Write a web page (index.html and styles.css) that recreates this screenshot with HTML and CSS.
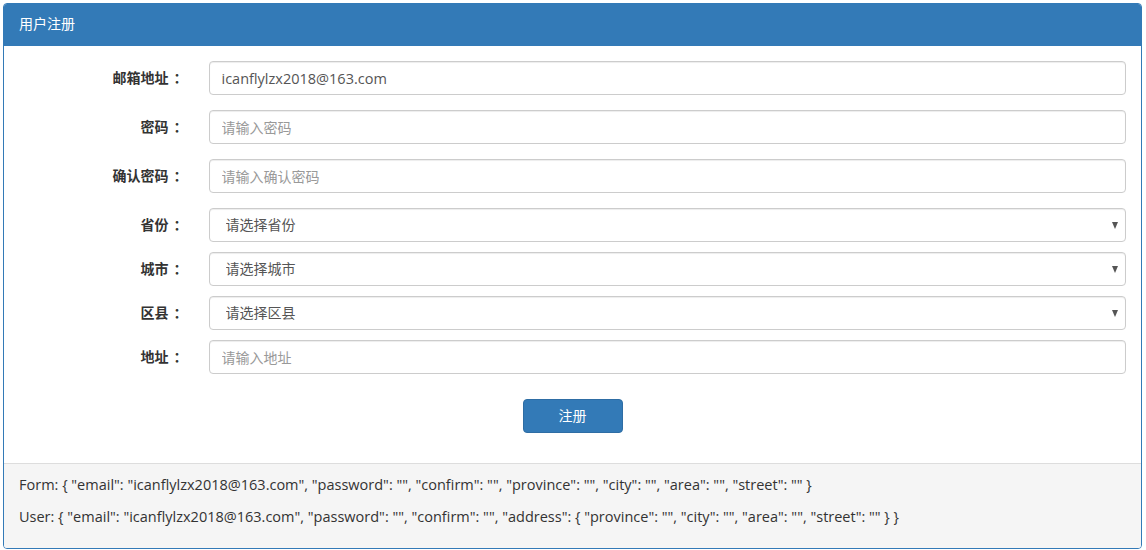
FILE: index.html
```html
<!DOCTYPE html>
<html lang="zh-CN">
<head>
<meta charset="utf-8">
<title>用户注册</title>
<link rel="stylesheet" href="styles.css">
</head>
<body>
<div class="panel">
  <div class="panel-heading">用户注册</div>
  <div class="panel-body">
    <div class="form-group">
      <label class="control-label">邮箱地址<span class="colon">：</span></label>
      <div class="control"><input class="form-control latin" type="text" value="icanflylzx2018@163.com"></div>
    </div>
    <div class="form-group">
      <label class="control-label">密码<span class="colon">：</span></label>
      <div class="control"><input class="form-control" type="password" placeholder="请输入密码"></div>
    </div>
    <div class="form-group">
      <label class="control-label">确认密码<span class="colon">：</span></label>
      <div class="control"><input class="form-control" type="password" placeholder="请输入确认密码"></div>
    </div>
    <div class="form-group form-group-select">
      <label class="control-label">省份<span class="colon">：</span></label>
      <div class="control select-wrap"><select class="form-control"><option>请选择省份</option></select></div>
    </div>
    <div class="form-group form-group-select">
      <label class="control-label">城市<span class="colon">：</span></label>
      <div class="control select-wrap"><select class="form-control"><option>请选择城市</option></select></div>
    </div>
    <div class="form-group form-group-select">
      <label class="control-label">区县<span class="colon">：</span></label>
      <div class="control select-wrap"><select class="form-control"><option>请选择区县</option></select></div>
    </div>
    <div class="form-group">
      <label class="control-label">地址<span class="colon">：</span></label>
      <div class="control"><input class="form-control" type="text" placeholder="请输入地址"></div>
    </div>
    <div class="form-actions">
      <button class="btn-primary" type="button">注册</button>
    </div>
  </div>
  <div class="panel-footer">
    <p>Form: { "email": "icanflylzx2018@163.com", "password": "", "confirm": "", "province": "", "city": "", "area": "", "street": "" }</p>
    <p>User: { "email": "icanflylzx2018@163.com", "password": "", "confirm": "", "address": { "province": "", "city": "", "area": "", "street": "" } }</p>
  </div>
</div>
</body>
</html>
```

FILE: styles.css
```css
* { box-sizing: border-box; }
html, body { background: #fff; }
body {
  margin: 3px 4px 3px 3px;
  font-family: "Open Sans", "Noto Sans CJK SC", sans-serif;
  font-size: 14px;
  line-height: 20px;
  color: #333;
}
.panel {
  border: 1px solid #337ab7;
  border-radius: 4px;
  background: #fff;
}
.panel-heading {
  background: #337ab7;
  color: #fff;
  padding: 10px 15px;
  border-bottom: 1px solid #337ab7;
  border-radius: 3px 3px 0 0;
  line-height: 20px;
  height: 42px;
}
.panel-body {
  padding: 15px 0 15px;
}
.form-group {
  display: grid;
  grid-template-columns: 2fr 10fr;
  margin-bottom: 15px;
}
.form-group-select { margin-bottom: 10px; }
.control-label {
  padding: 7px 11px 0 15px;
  text-align: right;
  font-weight: bold;
  color: #333;
}
.colon {
  display: inline-block;
  padding-left: 5px;
  margin-right: -5px;
}
.control {
  padding: 0 15px;
  position: relative;
}
.form-control {
  display: block;
  width: 100%;
  height: 34px;
  padding: 6px 12px;
  font-family: inherit;
  font-size: 14px;
  line-height: 20px;
  color: #555;
  background: #fff;
  border: 1px solid #ccc;
  border-radius: 4px;
  box-shadow: inset 0 1px 1px rgba(0,0,0,.075);
  outline: none;
}
.form-control.latin { font-size: 14.5px; }
.form-control::placeholder { color: #999; }
select.form-control {
  -webkit-appearance: none;
  appearance: none;
  padding-left: 16px;
}
.select-wrap::after {
  content: "";
  position: absolute;
  right: 23px;
  top: 14px;
  border-left: 3.5px solid transparent;
  border-right: 3.5px solid transparent;
  border-top: 7px solid #555;
  pointer-events: none;
}
.form-actions {
  display: flex;
  justify-content: center;
  padding-top: 10px;
  margin-bottom: 15px;
}
.btn-primary {
  width: 100px;
  height: 34px;
  background: #337ab7;
  border: 1px solid #2e6da4;
  border-radius: 4px;
  color: #fff;
  font-family: inherit;
  font-size: 14px;
  line-height: 20px;
  padding: 6px 12px;
}
.panel-footer {
  background: #f5f5f5;
  border-top: 1px solid #ddd;
  padding: 10px 15px;
  border-radius: 0 0 3px 3px;
  font-size: 14.5px;
}
.panel-footer p {
  margin: 0 0 10px;
  line-height: 22px;
}
```
